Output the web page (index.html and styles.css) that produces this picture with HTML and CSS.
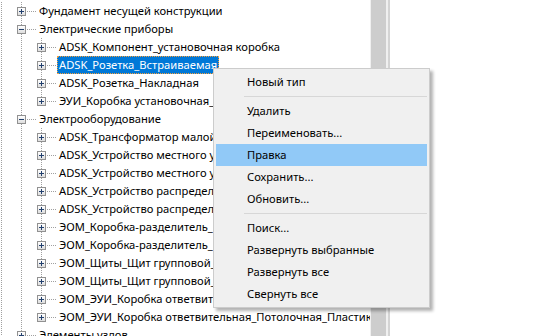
FILE: index.html
```html
<!DOCTYPE html>
<html lang="ru">
<head>
  <meta charset="UTF-8" />
  <title>Браузер проекта</title>
  <link rel="stylesheet" href="styles.css">
</head>
<body>
  <div class="window">
    <div class="tree">
      <div class="row"><span class="g v"></span><span class="ex full"><i class="box plus"></i></span><span class="label">Фундамент несущей конструкции</span></div>
      <div class="row"><span class="g v"></span><span class="ex full"><i class="box"></i></span><span class="label">Электрические приборы</span></div>
      <div class="row"><span class="g v"></span><span class="g v"></span><span class="ex full"><i class="box plus"></i></span><span class="label">ADSK_Компонент_установочная коробка</span></div>
      <div class="row"><span class="g v"></span><span class="g v"></span><span class="ex full"><i class="box plus"></i></span><span class="label selected">ADSK_Розетка_Встраиваемая</span></div>
      <div class="row"><span class="g v"></span><span class="g v"></span><span class="ex full"><i class="box plus"></i></span><span class="label">ADSK_Розетка_Накладная</span></div>
      <div class="row"><span class="g v"></span><span class="g v"></span><span class="ex last"><i class="box plus"></i></span><span class="label">ЭУИ_Коробка установочная_Пластиковая</span></div>
      <div class="row"><span class="g v"></span><span class="ex full"><i class="box"></i></span><span class="label">Электрооборудование</span></div>
      <div class="row"><span class="g v"></span><span class="g v"></span><span class="ex full"><i class="box plus"></i></span><span class="label">ADSK_Трансформатор малой мощности</span></div>
      <div class="row"><span class="g v"></span><span class="g v"></span><span class="ex full"><i class="box plus"></i></span><span class="label">ADSK_Устройство местного управления</span></div>
      <div class="row"><span class="g v"></span><span class="g v"></span><span class="ex full"><i class="box plus"></i></span><span class="label">ADSK_Устройство местного управления_Пост</span></div>
      <div class="row"><span class="g v"></span><span class="g v"></span><span class="ex full"><i class="box plus"></i></span><span class="label">ADSK_Устройство распределительное_Щит</span></div>
      <div class="row"><span class="g v"></span><span class="g v"></span><span class="ex full"><i class="box plus"></i></span><span class="label">ADSK_Устройство распределительное_Шкаф</span></div>
      <div class="row"><span class="g v"></span><span class="g v"></span><span class="ex full"><i class="box plus"></i></span><span class="label">ЭОМ_Коробка-разделитель_Настенная</span></div>
      <div class="row"><span class="g v"></span><span class="g v"></span><span class="ex full"><i class="box plus"></i></span><span class="label">ЭОМ_Коробка-разделитель_Потолочная</span></div>
      <div class="row"><span class="g v"></span><span class="g v"></span><span class="ex full"><i class="box plus"></i></span><span class="label">ЭОМ_Щиты_Щит групповой_Навесной</span></div>
      <div class="row"><span class="g v"></span><span class="g v"></span><span class="ex full"><i class="box plus"></i></span><span class="label">ЭОМ_Щиты_Щит групповой_Встраиваемый</span></div>
      <div class="row"><span class="g v"></span><span class="g v"></span><span class="ex full"><i class="box plus"></i></span><span class="label">ЭОМ_ЭУИ_Коробка ответвительная_Настенная</span></div>
      <div class="row"><span class="g v"></span><span class="g v"></span><span class="ex last"><i class="box plus"></i></span><span class="label">ЭОМ_ЭУИ_Коробка ответвительная_Потолочная_Пластиковая</span></div>
      <div class="row"><span class="g v"></span><span class="ex full"><i class="box plus"></i></span><span class="label">Элементы узлов</span></div>
    </div>
    <div class="scroll"><div class="thumb"></div></div>
    <div class="rest"></div>

    <div class="menu">
      <div class="item">Новый тип</div>
      <div class="sep"></div>
      <div class="item">Удалить</div>
      <div class="item">Переименовать...</div>
      <div class="item hot">Правка</div>
      <div class="item">Сохранить...</div>
      <div class="item">Обновить...</div>
      <div class="sep"></div>
      <div class="item">Поиск...</div>
      <div class="item">Развернуть выбранные</div>
      <div class="item">Развернуть все</div>
      <div class="item">Свернуть все</div>
    </div>
  </div>
</body>
</html>
```

FILE: styles.css
```css
body {
  margin: 0;
  font-family: "Noto Sans", "Open Sans", sans-serif;
  font-size: 11.2px;
  color: #000;
  background: #fff;
}
.window {
  position: relative;
  display: flex;
  height: 336px;
  overflow: hidden;
}
.tree {
  width: 370px;
  flex: none;
  overflow: hidden;
  padding-top: 2px;
  white-space: nowrap;
}
.row {
  display: flex;
  height: 18px;
  margin-left: -9px;
}
.g {
  width: 20px;
  height: 18px;
  flex: none;
}
.g.v {
  background: repeating-linear-gradient(to bottom, #a0a0a0 0 1px, transparent 1px 2px) 10px 0 / 1px 18px no-repeat;
}
.ex {
  width: 26px;
  height: 18px;
  flex: none;
  background:
    repeating-linear-gradient(to right, #a0a0a0 0 1px, transparent 1px 2px) 10px 9px / 16px 1px no-repeat,
    repeating-linear-gradient(to bottom, #a0a0a0 0 1px, transparent 1px 2px) 10px 0 / 1px 18px no-repeat;
}
.ex.last {
  background:
    repeating-linear-gradient(to right, #a0a0a0 0 1px, transparent 1px 2px) 10px 9px / 16px 1px no-repeat,
    repeating-linear-gradient(to bottom, #a0a0a0 0 1px, transparent 1px 2px) 10px 0 / 1px 9px no-repeat;
}
.box {
  display: block;
  width: 9px;
  height: 9px;
  box-sizing: border-box;
  margin: 5px 0 0 6px;
  border: 1px solid #919191;
  background:
    linear-gradient(#22406e, #22406e) center / 5px 1px no-repeat,
    linear-gradient(#fff, #dedede);
}
.box.plus {
  background:
    linear-gradient(#22406e, #22406e) center / 5px 1px no-repeat,
    linear-gradient(#22406e, #22406e) center / 1px 5px no-repeat,
    linear-gradient(#fff, #dedede);
}
.label {
  height: 18px;
  line-height: 17px;
  padding: 0 2px;
  box-sizing: border-box;
}
.label.selected {
  background: #0078d7;
  color: #fff;
  outline: 1px dotted #f5a03c;
  outline-offset: -1px;
}
.scroll {
  width: 18px;
  flex: none;
  background: #f0f0f0;
  border-right: 2px solid #d4d4d4;
}
.thumb {
  width: 15px;
  height: 100%;
  margin-left: 1px;
  background: #cdcdcd;
}
.rest {
  flex: 1;
}
.menu {
  position: absolute;
  left: 213px;
  top: 68px;
  width: 217px;
  box-sizing: border-box;
  padding: 2px;
  background: #f0f0f0;
  border: 1px solid #cccccc;
  box-shadow: 3px 3px 3px rgba(0, 0, 0, 0.3);
}
.item {
  height: 22px;
  line-height: 22px;
  padding-left: 31px;
}
.item.hot {
  background: #91c9f7;
}
.sep {
  height: 1px;
  margin: 3px 0 3px 28px;
  background: #d7d7d7;
}
```
